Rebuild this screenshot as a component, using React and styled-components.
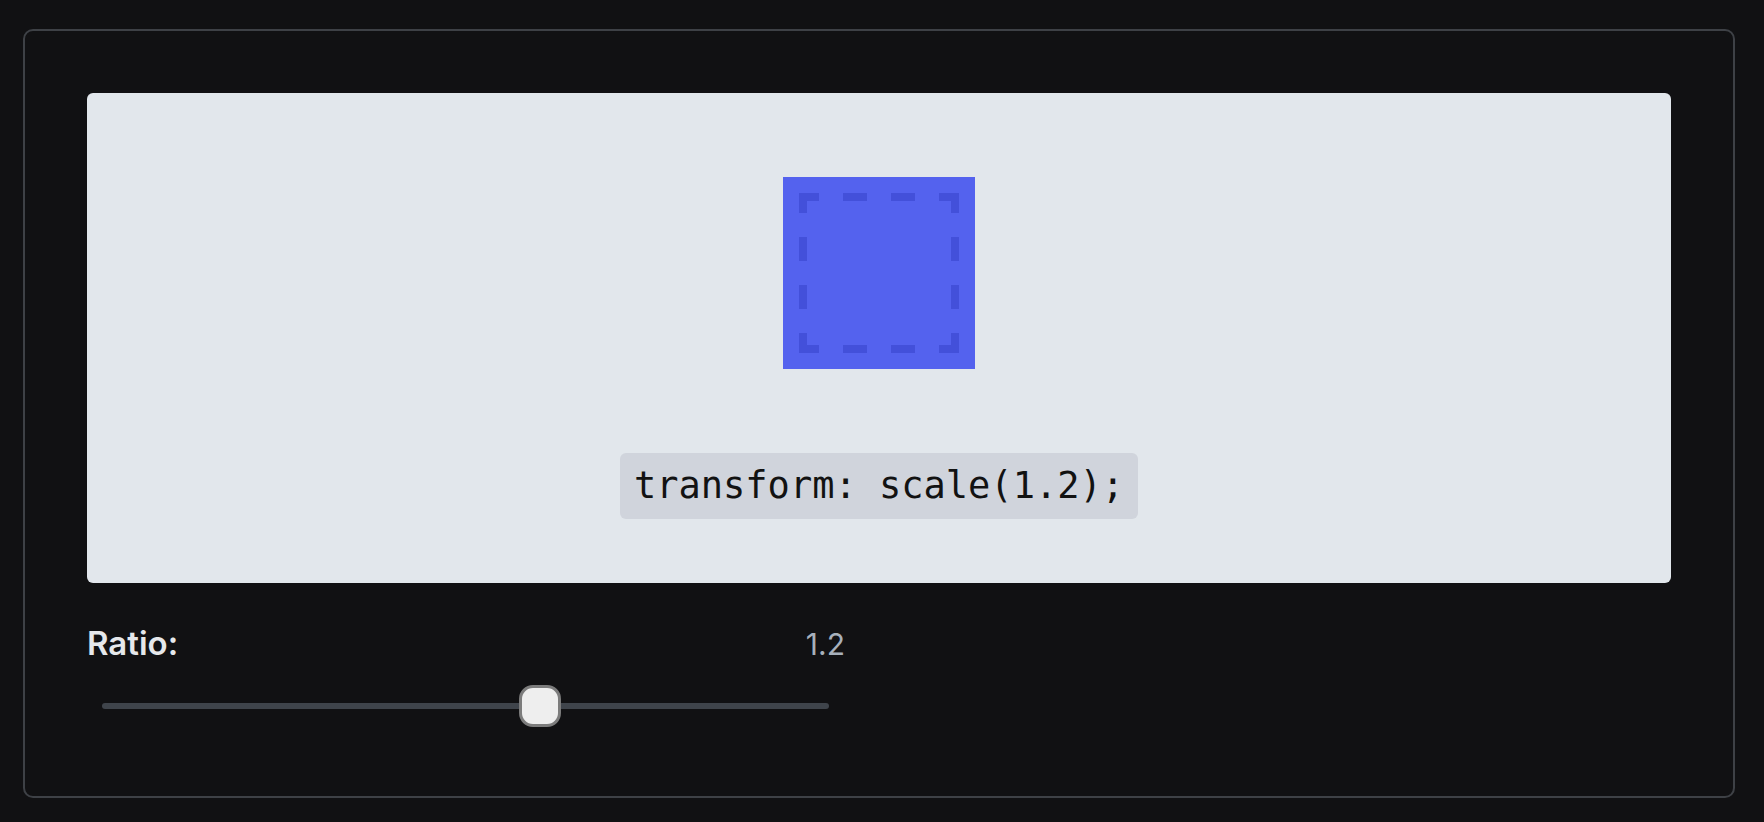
import React from "react";
import styled, { createGlobalStyle } from "styled-components";

const GlobalStyle = createGlobalStyle`
  html, body {
    margin: 0;
    padding: 0;
    background: #111113;
  }
  body {
    font-family: "Inter", "Lato", "Noto Sans", sans-serif;
  }
`;

const Page = styled.div`
  padding: 29px 0 24px 23px;
`;

const Card = styled.section`
  box-sizing: border-box;
  width: 1712px;
  height: 769px;
  border: 2px solid #3e4146;
  border-radius: 10px;
  padding: 62px;
  display: flex;
  flex-direction: column;
`;

const Preview = styled.div`
  height: 490px;
  box-sizing: border-box;
  background: #e2e7ec;
  border-radius: 6px;
  padding: 84px 0 64px;
  display: flex;
  flex-direction: column;
  align-items: center;
  gap: 84px;
`;

const Square = styled.div`
  width: 192px;
  height: 192px;
  background: #5462ee;
  svg {
    display: block;
  }
`;

const Code = styled.code`
  display: block;
  box-sizing: border-box;
  height: 66px;
  padding: 10px 14px;
  line-height: 46px;
  font-size: 37px;
  font-family: "DejaVu Sans Mono", "Liberation Mono", monospace;
  color: #121212;
  background: #d0d4dc;
  border-radius: 6px;
  white-space: pre;
`;

const Controls = styled.div`
  width: 760px;
  margin-top: 40px;
`;

const LabelRow = styled.div`
  display: flex;
  justify-content: space-between;
  align-items: baseline;
  height: 40px;
  line-height: 40px;
`;

const Label = styled.span`
  font-size: 33px;
  font-weight: 600;
  color: #e6e8eb;
`;

const Value = styled.span`
  font-size: 30px;
  font-weight: 400;
  color: #a7b0bb;
  padding-right: 2px;
`;

const SliderTrack = styled.div`
  position: relative;
  height: 42px;
  margin: 22px 18px 0 15px;
  &::before {
    content: "";
    position: absolute;
    left: 0;
    right: 0;
    top: 18px;
    height: 6px;
    border-radius: 3px;
    background: #3f444b;
  }
`;

const Thumb = styled.div`
  position: absolute;
  top: 0;
  width: 42px;
  height: 42px;
  box-sizing: border-box;
  transform: translateX(-50%);
  background: #eeeeee;
  border: 3px solid #7c7c7c;
  border-radius: 14px;
`;

const DASH = "20 24 24 24 24 24 20";

const DashedFrame = () => (
  <svg width="192" height="192" viewBox="0 0 192 192">
    <g stroke="#4350da" strokeWidth="8" strokeDasharray={DASH} fill="none">
      <line x1="16" y1="20" x2="176" y2="20" />
      <line x1="16" y1="172" x2="176" y2="172" />
      <line x1="20" y1="16" x2="20" y2="176" />
      <line x1="172" y1="16" x2="172" y2="176" />
    </g>
  </svg>
);

export default function App() {
  const ratio = 1.2;
  const min = 0;
  const max = 2;
  const pct = ((ratio - min) / (max - min)) * 100;

  return (
    <>
      <GlobalStyle />
      <Page>
        <Card>
          <Preview>
            <Square>
              <DashedFrame />
            </Square>
            <Code>transform: scale({ratio});</Code>
          </Preview>
          <Controls>
            <LabelRow>
              <Label>Ratio:</Label>
              <Value>{ratio}</Value>
            </LabelRow>
            <SliderTrack>
              <Thumb style={{ left: `calc(${pct}% + 2px)` }} />
            </SliderTrack>
          </Controls>
        </Card>
      </Page>
    </>
  );
}
